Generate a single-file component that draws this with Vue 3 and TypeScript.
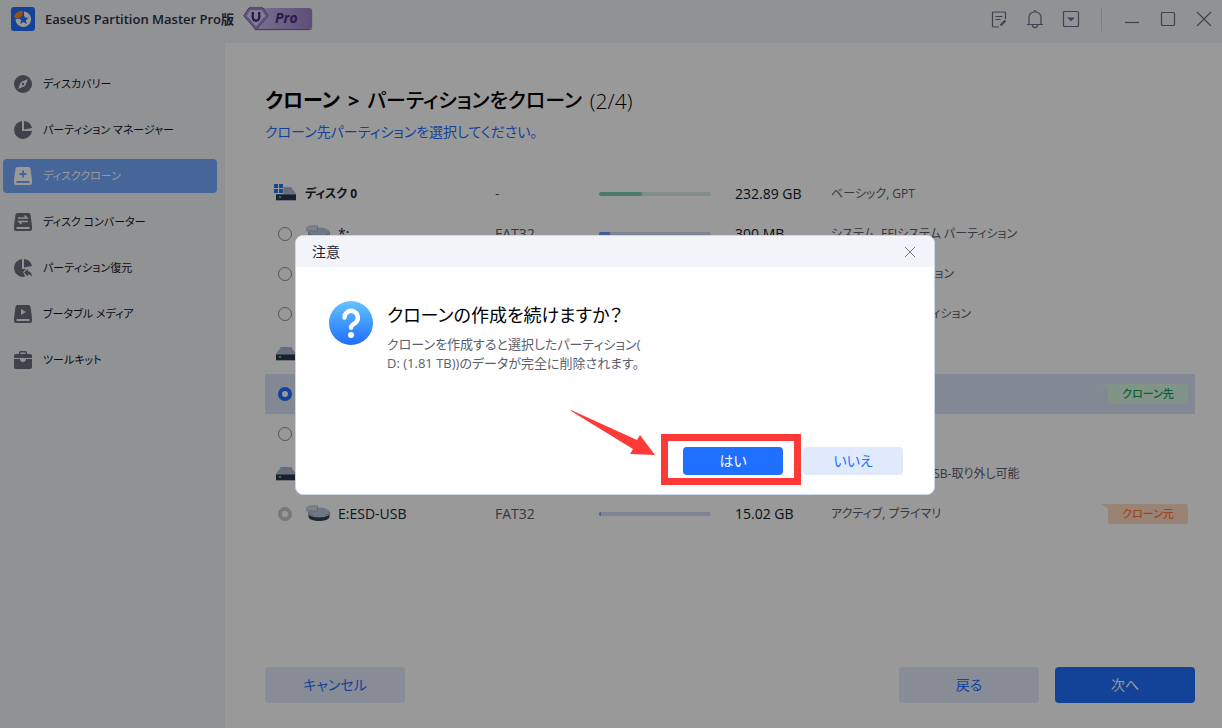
<script setup lang="ts">
import { ref } from 'vue'

interface NavItem {
  id: string
  label: string
}

interface Row {
  id: string
  kind: 'disk' | 'part'
  name: string
  fs: string
  used: number
  size: string
  type: string
  system?: boolean
  locked?: boolean
  tag?: 'target' | 'source'
}

const nav: NavItem[] = [
  { id: 'discovery', label: 'ディスカバリー' },
  { id: 'manager', label: 'パーティション マネージャー' },
  { id: 'clone', label: 'ディスククローン' },
  { id: 'convert', label: 'ディスク コンバーター' },
  { id: 'recover', label: 'パーティション復元' },
  { id: 'boot', label: 'ブータブル メディア' },
  { id: 'toolkit', label: 'ツールキット' },
]
const activeNav = ref('clone')

const rows: Row[] = [
  { id: 'disk0', kind: 'disk', name: 'ディスク 0', fs: '-', used: 38, size: '232.89 GB', type: 'ベーシック, GPT', system: true },
  { id: 'efi', kind: 'part', name: '*:', fs: 'FAT32', used: 10, size: '300 MB', type: 'システム, EFIシステム パーティション' },
  { id: 'c', kind: 'part', name: '', fs: '', used: 0, size: '', type: 'システム, パーティション' },
  { id: 'r', kind: 'part', name: '', fs: '', used: 0, size: '', type: '回復, データ パーティション' },
  { id: 'disk1', kind: 'disk', name: '', fs: '', used: 0, size: '', type: '' },
  { id: 'd', kind: 'part', name: 'D:', fs: '', used: 0, size: '1.81 TB', type: '', tag: 'target' },
  { id: 'f', kind: 'part', name: '', fs: '', used: 0, size: '', type: '' },
  { id: 'disk2', kind: 'disk', name: '', fs: '', used: 0, size: '', type: 'ベーシック, MBR, USB-取り外し可能' },
  { id: 'e', kind: 'part', name: 'E:ESD-USB', fs: 'FAT32', used: 2, size: '15.02 GB', type: 'アクティブ, プライマリ', locked: true, tag: 'source' },
]
const target = ref('d')
</script>

<template>
  <div class="app">
    <header class="titlebar">
      <svg class="logo" viewBox="0 0 24 24" aria-hidden="true">
        <rect width="24" height="24" rx="3" fill="#1f70ff" />
        <path d="M13 4.500a7.800 7.800 0 1 1-8.500 7.500l8.500-1z" fill="#fff" />
        <path d="M3 10.500C3.500 6.500 7 3.800 12 4l-.8 5L8 11.500z" fill="#ff8a14" />
        <path d="M12.500 7l1.500 3.400 3.700.3-2.800 2.500.9 3.700-3.300-2-3.200 2 .9-3.700-2.900-2.500 3.700-.3z" fill="#1f70ff" />
      </svg>
      <span class="app-name">EaseUS Partition Master Pro版</span>
      <span class="pro">
        <svg class="gem" viewBox="0 0 26 24" aria-hidden="true">
          <path d="M6 .8h14l5.200 8L13 23 .8 8.800z" fill="#a996d8" stroke="#6f5a9c" />
          <path d="M7 2.800h12l3.800 6L13 20 3.200 8.800z" fill="#d9d2f5" stroke="#8f7cc0" stroke-width=".8" />
          <path d="M9.800 5v5.500a3.200 3.200 0 0 0 6.400 0V5" fill="none" stroke="#4a2f80" stroke-width="2.400" />
        </svg>
        <span class="pro-text">Pro</span>
      </span>
      <div class="window-tools">
        <button type="button" aria-label="ログ">
          <svg viewBox="0 0 18 18"><path d="M15.500 9V3a1 1 0 0 0-1-1h-11a1 1 0 0 0-1 1v13a1 1 0 0 0 1 1H9M5.500 6.500h7M5.500 9.500h5" /><path d="M10.500 15.500l5-5" stroke-width="2.200" /></svg>
        </button>
        <button type="button" aria-label="通知">
          <svg viewBox="0 0 18 20"><path d="M1 15.500h16M3 15.500V9c0-3 2-5.500 5-6 0-2 2-2 2 0 3 .5 5 3 5 6v6.500M6.500 16c0 3.500 5 3.500 5 0" /></svg>
        </button>
        <button type="button" aria-label="メニュー">
          <svg viewBox="0 0 18 18"><rect x="1.500" y="1.500" width="15" height="15" rx="1" /><path d="M6.500 8h5L9 10.500z" class="solid" /></svg>
        </button>
        <span class="divider"></span>
        <button type="button" aria-label="最小化">
          <svg viewBox="0 0 18 18"><path d="M2 12.500h14" /></svg>
        </button>
        <button type="button" aria-label="最大化">
          <svg viewBox="0 0 18 18"><rect x="2.500" y="2.500" width="13" height="13" rx="1" /></svg>
        </button>
        <button type="button" aria-label="閉じる">
          <svg viewBox="0 0 18 18"><path d="M2 2l14 14M16 2L2 16" /></svg>
        </button>
      </div>
    </header>

    <div class="body">
      <nav class="sidebar">
        <button
          v-for="item in nav"
          :key="item.id"
          type="button"
          class="nav-item"
          :class="{ active: item.id === activeNav }"
          @click="activeNav = item.id"
        >
          <svg viewBox="0 0 20 20" aria-hidden="true">
            <g v-if="item.id === 'discovery'">
              <circle cx="10" cy="10" r="9" />
              <path class="cut" d="M15 5l-3 7-7 3 3-7z" />
              <circle cx="10" cy="10" r="1.200" />
            </g>
            <g v-else-if="item.id === 'manager' || item.id === 'recover'">
              <path d="M9 1v10h10a9 9 0 1 1-10-10z" />
              <path d="M11 1a9 9 0 0 1 8 7l-8 1.500z" />
              <g v-if="item.id === 'recover'">
                <path class="cut" d="M10 14l5-5 5 2v9h-7z" />
                <path d="M11 14.500l4-3.500v2.200c3 .2 4 2.800 4 5.800-1-2-2-2.600-4-2.600v2z" />
              </g>
            </g>
            <g v-else-if="item.id === 'toolkit'">
              <path d="M6 4V2.500A1.500 1.500 0 0 1 7.500 1h5A1.500 1.500 0 0 1 14 2.500V4h-1.500V2.500h-5V4z" />
              <path d="M1 6a2 2 0 0 1 2-2h14a2 2 0 0 1 2 2v2H1z" />
              <path d="M1 9h6a3 3 0 0 0 6 0h6v8a2 2 0 0 1-2 2H3a2 2 0 0 1-2-2z" />
            </g>
            <g v-else>
              <path d="M4.500 1h11a2 2 0 0 1 2 1.700L19 14v3a2 2 0 0 1-2 2H3a2 2 0 0 1-2-2v-3L2.500 2.700A2 2 0 0 1 4.500 1z" />
              <path class="line" d="M3.500 16h13" />
              <path v-if="item.id === 'clone'" class="line" d="M10 4.500v7M6.500 8h7" />
              <path v-if="item.id === 'convert'" class="line thin" d="M5 6h9l-2.500-2.500M15 9.500H6L8.500 12" />
              <path v-if="item.id === 'boot'" class="cut" d="M8 5l5 3-5 3z" />
            </g>
          </svg>
          <span>{{ item.label }}</span>
        </button>
      </nav>

      <main class="main">
        <h1><b>クローン</b><b>&gt;</b><span>パーティションをクローン</span><span class="step">(2/4)</span></h1>
        <p class="lead">クローン先パーティションを選択してください。</p>

        <table class="volumes">
          <colgroup>
            <col class="c-name" /><col class="c-fs" /><col class="c-bar" /><col class="c-size" /><col /><col class="c-tag" />
          </colgroup>
          <tbody>
            <tr v-for="row in rows" :key="row.id" :class="[row.kind, { selected: row.id === target }]">
              <td>
                <label class="name">
                  <input v-if="row.kind === 'part'" v-model="target" type="radio" name="target" :value="row.id" :disabled="row.locked" :aria-label="row.id" />
                  <svg v-if="row.kind === 'disk'" viewBox="0 0 24 20" aria-hidden="true">
                    <path d="M8 3h10l5 7H3z" fill="#a9b7cb" />
                    <path d="M3 10h20v6.500H3z" fill="#283850" />
                    <path d="M2.500 10h21M2.500 16.500h21" stroke="#c5cedc" stroke-width=".8" />
                    <circle cx="7" cy="13" r="1" fill="#7fdc6a" />
                    <g v-if="row.system">
                      <path d="M0 0h10.500v10H0z" fill="#fff" />
                      <path d="M1 0h4v4H1zM6 0h4v4H6zM1 5h4v4H1zM6 5h4v4H6z" fill="#2178f5" />
                    </g>
                  </svg>
                  <svg v-else viewBox="0 0 24 20" aria-hidden="true">
                    <path d="M2.500 8v4.500c0 6 21 6 21 0V8z" fill="#31445b" />
                    <ellipse cx="13" cy="8" rx="10.500" ry="4.500" fill="#b7c7da" />
                    <path d="M2.500 10c3 3.800 18 3.800 21 0" fill="none" stroke="#dbe3ee" />
                    <path d="M.8 4C2 2 5 1.800 11.500 2V7H.8z" fill="#d1dbe8" stroke="#94a5ba" stroke-width=".7" />
                  </svg>
                  <span>{{ row.name }}</span>
                </label>
              </td>
              <td class="fs">{{ row.fs }}</td>
              <td>
                <div v-if="row.size" class="bar"><i :style="{ width: row.used + '%' }"></i></div>
              </td>
              <td class="size">{{ row.size }}</td>
              <td class="type">{{ row.type }}</td>
              <td>
                <span v-if="row.tag" class="tag" :class="row.tag">{{ row.tag === 'target' ? 'クローン先' : 'クローン元' }}</span>
              </td>
            </tr>
          </tbody>
        </table>

        <footer class="actions">
          <button type="button" class="btn soft cancel">キャンセル</button>
          <button type="button" class="btn soft">戻る</button>
          <button type="button" class="btn primary">次へ</button>
        </footer>
      </main>
    </div>

    <div class="overlay">
      <section class="dialog" role="dialog" aria-labelledby="dialog-title">
        <header>
          <span id="dialog-title">注意</span>
          <button type="button" aria-label="閉じる">
            <svg viewBox="0 0 12 12"><path d="M1 1l10 10M11 1L1 11" /></svg>
          </button>
        </header>
        <div class="message">
          <svg viewBox="0 0 44 44" aria-hidden="true">
            <defs>
              <linearGradient id="ask" x1="0" y1="0" x2="0" y2="1">
                <stop offset="0" stop-color="#64c3ff" />
                <stop offset="1" stop-color="#1f6dff" />
              </linearGradient>
            </defs>
            <circle cx="22" cy="22" r="22" fill="url(#ask)" />
            <path d="M15.500 16.500a6.700 6.700 0 1 1 11 5.200c-2.700 2-4.500 2.800-4.500 5" fill="none" stroke="#fff" stroke-width="4.400" stroke-linecap="round" />
            <circle cx="22" cy="34" r="3" fill="#fff" />
          </svg>
          <div>
            <h2>クローンの作成を続けますか？</h2>
            <p>クローンを作成すると選択したパーティション(<br />D: (1.81 TB))のデータが完全に削除されます。</p>
          </div>
        </div>
        <footer>
          <span class="pick">
            <button type="button" class="btn primary">はい</button>
            <span class="frame"></span>
            <svg class="arrow" viewBox="0 0 86 50" aria-hidden="true">
              <path d="M0 0L66 30l3-5 15 20-25-1 3-5L0 1z" fill="#fd3a38" />
            </svg>
          </span>
          <button type="button" class="btn soft">いいえ</button>
        </footer>
      </section>
    </div>
  </div>
</template>

<style>
body {
  margin: 0;
}
</style>

<style scoped>
.app {
  display: flex;
  flex-direction: column;
  min-height: 100vh;
  background: #f0f3f6;
  color: #10151f;
  font: 14px/20px "Open Sans", "Noto Sans CJK JP", sans-serif;
  font-feature-settings: "palt";
}
button {
  padding: 0;
  border: 0;
  background: none;
  color: inherit;
  font: inherit;
  font-feature-settings: inherit;
}
.titlebar {
  display: flex;
  align-items: center;
  height: 43px;
  padding: 0 0 6px 11px;
  box-sizing: border-box;
}
.logo {
  width: 24px;
  height: 24px;
  margin-right: 10px;
}
.app-name {
  font-size: 13px;
  font-weight: 600;
  color: #2a3142;
  white-space: nowrap;
}
.pro {
  display: flex;
  align-items: center;
  margin-left: 9px;
}
.gem {
  width: 26px;
  height: 24px;
  z-index: 1;
}
.pro-text {
  height: 21px;
  margin-left: -15px;
  padding: 0 14px 0 21px;
  border-radius: 3px;
  background: linear-gradient(90deg, #c7c0ee, #9d80c9);
  box-shadow: 0 1px 1px #6c5596;
  color: #4a2f80;
  font-size: 14px;
  font-weight: 700;
  font-style: italic;
}
.window-tools {
  display: flex;
  align-items: center;
  margin-left: auto;
}
.window-tools button {
  display: grid;
  place-items: center;
  width: 36px;
  height: 36px;
}
.window-tools svg {
  width: 18px;
  height: 20px;
  fill: none;
  stroke: #6a6f85;
  stroke-width: 1.2;
}
.window-tools .solid {
  fill: #6a6f85;
}
.divider {
  width: 1px;
  height: 24px;
  margin: 0 12px;
  background: #cdd8e6;
}
.body {
  display: flex;
  flex: 1;
}
.sidebar {
  display: flex;
  flex-direction: column;
  flex: 0 0 225px;
  gap: 12px;
  box-sizing: border-box;
  padding: 24px 8px 24px 3px;
}
.nav-item {
  display: flex;
  align-items: center;
  gap: 10px;
  height: 34px;
  padding-left: 10px;
  border-radius: 4px;
  font-size: 11px;
  white-space: nowrap;
}
.nav-item svg {
  width: 20px;
  height: 20px;
  fill: #696e7d;
}
.nav-item .cut {
  fill: #f0f3f6;
}
.nav-item .line {
  fill: none;
  stroke: #f0f3f6;
  stroke-width: 2;
}
.nav-item .thin {
  stroke-width: 1.5;
}
.nav-item.active {
  background: #75a8ff;
  color: #fff;
}
.nav-item.active svg {
  fill: #fff;
}
.nav-item.active .line {
  stroke: #75a8ff;
}
.main {
  display: flex;
  flex: 1;
  flex-direction: column;
  min-width: 0;
  padding: 42px 27px 25px 40px;
  background: #fff;
}
h1 {
  display: flex;
  gap: 8px;
  margin: 0;
  font-size: 20px;
  line-height: 32px;
  font-weight: 500;
  color: #000;
  white-space: nowrap;
}
h1 b {
  font-weight: 700;
}
h1 .step {
  font-size: 21px;
  font-weight: 300;
}
.lead {
  margin: 5px 0 32px;
  font-size: 14px;
  color: #1f70ff;
}
.volumes {
  width: 100%;
  table-layout: fixed;
  border-collapse: collapse;
}
.c-name {
  width: 230px;
}
.c-fs {
  width: 104px;
}
.c-bar {
  width: 136px;
}
.c-size {
  width: 96px;
}
.c-tag {
  width: 87px;
}
td {
  height: 40px;
  padding: 0;
  white-space: nowrap;
}
.selected {
  background: #d9e3f7;
}
.name {
  display: flex;
  align-items: center;
  gap: 8px;
  padding-left: 13px;
  color: #1c2433;
}
.disk .name {
  padding-left: 8px;
  font-size: 12px;
  font-weight: 700;
}
.name svg {
  width: 24px;
  height: 20px;
}
.name input {
  appearance: none;
  box-sizing: border-box;
  width: 14px;
  height: 14px;
  margin: 0 6px 0 0;
  border: 1px solid #8a909e;
  border-radius: 50%;
}
.name input:checked {
  border: 4px solid #1f70ff;
  background: #fff;
}
.name input:disabled {
  border: 4px solid #c8cad0;
}
.fs,
.type {
  color: #5a606d;
}
.type {
  font-size: 12px;
}
.size {
  color: #10151f;
}
.bar {
  width: 112px;
  height: 4px;
  border-radius: 2px;
  background: #d2dcf4;
  overflow: hidden;
}
.bar i {
  display: block;
  height: 100%;
  background: #6c9cf5;
}
.disk .bar {
  background: #d8ebe2;
}
.disk .bar i {
  border-radius: 2px;
  background: #7ccbae;
}
.tag {
  position: relative;
  display: block;
  width: 80px;
  border-radius: 3px;
  font-size: 11px;
  font-weight: 500;
  text-align: center;
}
.tag::before {
  content: "";
  position: absolute;
  top: 0;
  left: -7px;
  border-top: 5px solid;
  border-left: 8px solid transparent;
}
.target {
  background: #d8f7e2;
  color: #12a350;
}
.target::before {
  border-top-color: #d8f7e2;
}
.source {
  background: #ffdac4;
  color: #ff7a3c;
}
.source::before {
  border-top-color: #ffdac4;
}
.actions {
  display: flex;
  gap: 16px;
  margin-top: auto;
}
.btn {
  width: 140px;
  height: 36px;
  border-radius: 4px;
}
.primary {
  background: #1f70ff;
  color: #fff;
}
.soft {
  background: #e1e9fc;
  color: #1f70ff;
}
.cancel {
  margin-right: auto;
}
.overlay {
  position: fixed;
  inset: 0;
  z-index: 2;
  display: grid;
  place-items: center;
  padding: 2px 0 0 8px;
  background: rgba(0, 0, 0, 0.4);
}
.dialog {
  box-sizing: border-box;
  width: 640px;
  max-width: 100%;
  border: 1px solid #ccd8ea;
  border-radius: 8px;
  background: #fff;
}
.dialog > header {
  display: flex;
  align-items: center;
  justify-content: space-between;
  height: 31px;
  padding: 0 16px;
  border-radius: 8px 8px 0 0;
  background: #f2f4fa;
  color: #1c2433;
}
.dialog > header svg {
  display: block;
  width: 16px;
  height: 12px;
  fill: none;
  stroke: #6f768c;
}
.message {
  display: flex;
  align-items: flex-start;
  gap: 14px;
  min-height: 120px;
  padding: 34px 32px 26px 33px;
}
.message svg {
  flex: none;
  width: 44px;
  height: 44px;
}
h2 {
  margin: 0 0 6px;
  font-size: 18px;
  line-height: 28px;
  font-weight: 400;
  color: #000;
}
.message p {
  margin: 0;
  font-size: 13px;
  line-height: 19px;
  color: #5a606d;
}
.dialog > footer {
  display: flex;
  justify-content: flex-end;
  gap: 20px;
  padding: 0 31px 19px;
}
.dialog .btn {
  display: block;
  width: 100px;
  height: 28px;
}
.pick {
  position: relative;
}
.frame {
  position: absolute;
  inset: -13px -18px -10px -22px;
  border: 7px solid #fd3a38;
  pointer-events: none;
}
.arrow {
  position: absolute;
  top: -37px;
  left: -112px;
  width: 86px;
  height: 50px;
}
</style>
